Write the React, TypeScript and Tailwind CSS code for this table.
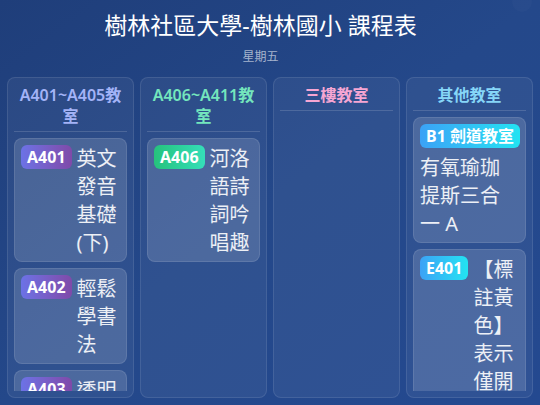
import React from 'react';

type Course = {
  room: string;
  name: string;
};

type Column = {
  title: string;
  titleColor: string;
  badge: string;
  courses: Course[];
};

const columns: Column[] = [
  {
    title: 'A401~A405教室',
    titleColor: 'text-[#a3b3f7]',
    badge: 'bg-gradient-to-r from-[#6b72e6] to-[#7f4aa9]',
    courses: [
      { room: 'A401', name: '英文發音基礎(下)' },
      { room: 'A402', name: '輕鬆學書法' },
      { room: 'A403', name: '透明水彩畫' },
    ],
  },
  {
    title: 'A406~A411教室',
    titleColor: 'text-[#74e6bd]',
    badge: 'bg-gradient-to-r from-[#26c27c] to-[#35dfb9]',
    courses: [{ room: 'A406', name: '河洛語詩詞吟唱趣' }],
  },
  {
    title: '三樓教室',
    titleColor: 'text-[#f6a6d3]',
    badge: 'bg-gradient-to-r from-[#ec4899] to-[#f472b6]',
    courses: [],
  },
  {
    title: '其他教室',
    titleColor: 'text-[#86d6f8]',
    badge: 'bg-gradient-to-r from-[#3ba2f6] to-[#22e3f2]',
    courses: [
      { room: 'B1 劍道教室', name: '有氧瑜珈提斯三合一 A' },
      { room: 'E401', name: '【標註黃色】表示僅開放網路報名' },
    ],
  },
];

const CourseCard: React.FC<{ course: Course; badge: string }> = ({ course, badge }) => (
  <div className="shrink-0 rounded-lg border border-white/10 bg-white/[0.14] px-[6px] pt-[6px] pb-[4px]">
    <div className="flex flex-wrap items-start gap-x-[5px] gap-y-[6px]">
      <span
        className={`${badge} shrink-0 whitespace-nowrap rounded-md px-1.5 text-[16px] font-bold leading-6 text-white`}
      >
        {course.room}
      </span>
      <span className="min-w-0 flex-1 text-[20px] leading-[28px] text-white/90">{course.name}</span>
    </div>
  </div>
);

const App: React.FC = () => {
  return (
    <div
      className="relative flex h-[405px] w-full flex-col overflow-hidden bg-gradient-to-br from-[#1f3e7a] via-[#24488a] to-[#244990] px-[7px] pt-[9px] pb-[7px] text-white"
      style={{ fontFamily: '"Noto Sans", "Noto Sans CJK TC", sans-serif' }}
    >
      {/* faint round button peeking at the top right */}
      <div className="absolute -top-2 right-2 h-5 w-5 rounded-full bg-white/[0.02]" />

      <div className="pr-[19px]">
        <h1 className="text-center text-[23px] leading-8 font-normal">樹林社區大學-樹林國小 課程表</h1>
        <p className="mt-2 text-center text-xs leading-4 text-white/60">星期五</p>
      </div>

      <div className="mt-3 grid min-h-0 flex-1 grid-cols-4 gap-1.5">
        {columns.map((col) => (
          <div
            key={col.title}
            className="flex min-h-0 flex-col rounded-lg border border-white/10 bg-white/[0.05] px-1.5 pb-1.5"
          >
            <div
              className={`border-b border-white/15 pt-[7px] pb-1 text-center text-[16px] leading-[21px] font-semibold ${col.titleColor}`}
            >
              {col.title}
            </div>
            <div className="mt-1.5 flex min-h-0 flex-1 flex-col gap-1.5 overflow-hidden">
              {col.courses.map((c) => (
                <CourseCard key={c.room} course={c} badge={col.badge} />
              ))}
            </div>
          </div>
        ))}
      </div>
    </div>
  );
};

export default App;
